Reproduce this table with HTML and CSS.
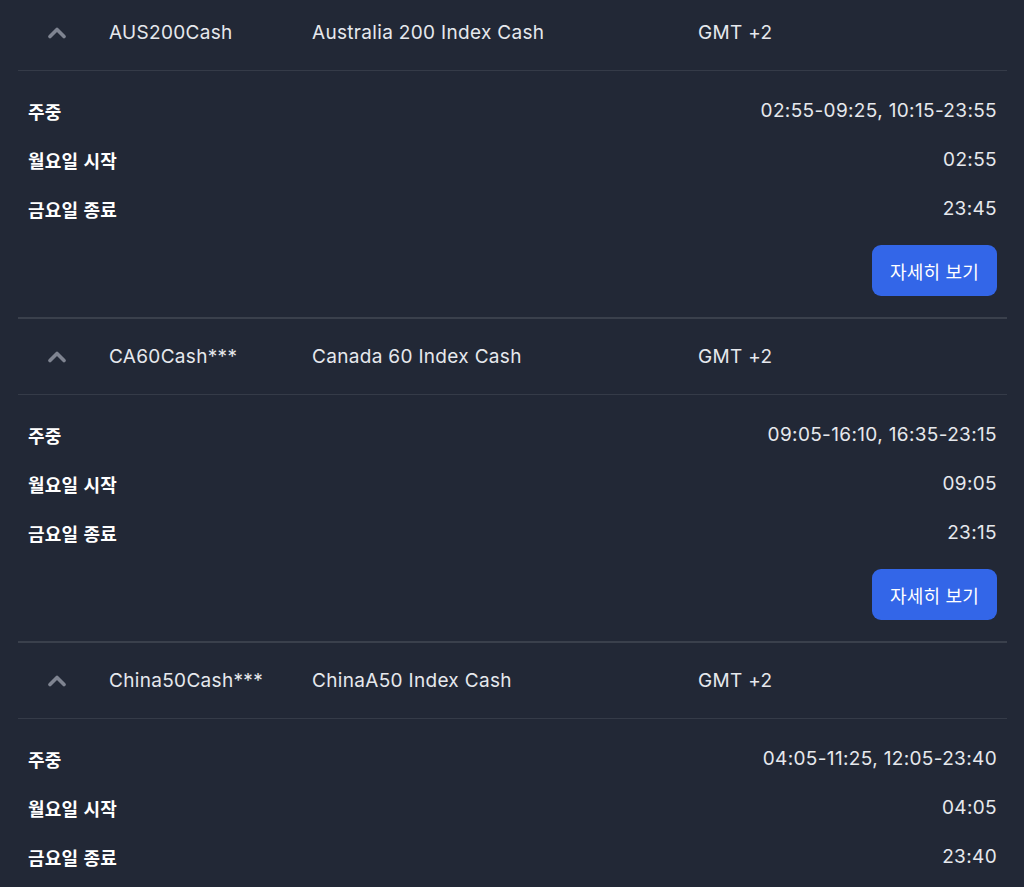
FILE: index.html
```html
<!DOCTYPE html>
<html lang="ko">
<head>
<meta charset="utf-8">
<link rel="stylesheet" href="styles.css">
</head>
<body>
<div class="list">
  <section class="item">
    <div class="head">
      <span class="chev"><svg width="20" height="13" viewBox="0 0 20 13"><path d="M3 10.5 L10 3.5 L17 10.5" fill="none" stroke="currentColor" stroke-width="3.6" stroke-linecap="round" stroke-linejoin="round"/></svg></span>
      <span>AUS200Cash</span>
      <span>Australia 200 Index Cash</span>
      <span>GMT +2</span>
    </div>
    <div class="body">
      <div class="row"><span class="lbl">주중</span><span class="val">02:55-09:25, 10:15-23:55</span></div>
      <div class="row"><span class="lbl">월요일 시작</span><span class="val">02:55</span></div>
      <div class="row"><span class="lbl">금요일 종료</span><span class="val">23:45</span></div>
      <div class="actions"><button class="btn">자세히 보기</button></div>
    </div>
  </section>
  <section class="item">
    <div class="head">
      <span class="chev"><svg width="20" height="13" viewBox="0 0 20 13"><path d="M3 10.5 L10 3.5 L17 10.5" fill="none" stroke="currentColor" stroke-width="3.6" stroke-linecap="round" stroke-linejoin="round"/></svg></span>
      <span>CA60Cash***</span>
      <span>Canada 60 Index Cash</span>
      <span>GMT +2</span>
    </div>
    <div class="body">
      <div class="row"><span class="lbl">주중</span><span class="val">09:05-16:10, 16:35-23:15</span></div>
      <div class="row"><span class="lbl">월요일 시작</span><span class="val">09:05</span></div>
      <div class="row"><span class="lbl">금요일 종료</span><span class="val">23:15</span></div>
      <div class="actions"><button class="btn">자세히 보기</button></div>
    </div>
  </section>
  <section class="item">
    <div class="head">
      <span class="chev"><svg width="20" height="13" viewBox="0 0 20 13"><path d="M3 10.5 L10 3.5 L17 10.5" fill="none" stroke="currentColor" stroke-width="3.6" stroke-linecap="round" stroke-linejoin="round"/></svg></span>
      <span>China50Cash***</span>
      <span>ChinaA50 Index Cash</span>
      <span>GMT +2</span>
    </div>
    <div class="body">
      <div class="row"><span class="lbl">주중</span><span class="val">04:05-11:25, 12:05-23:40</span></div>
      <div class="row"><span class="lbl">월요일 시작</span><span class="val">04:05</span></div>
      <div class="row"><span class="lbl">금요일 종료</span><span class="val">23:40</span></div>
    </div>
  </section>
</div>
</body>
</html>
```

FILE: styles.css
```css
html, body {
  margin: 0;
  padding: 0;
  background: #222836;
  overflow: hidden;
}
body {
  font-family: Inter, "Noto Sans CJK KR", sans-serif;
  color: #e6e8ed;
}
.list {
  margin: -5px 17px 0 18px;
}
.item {
  border-bottom: 2px solid #3a404c;
}
.head {
  display: grid;
  grid-template-columns: 91px 203px 386px 1fr;
  align-items: center;
  height: 75px;
  border-bottom: 1px solid #353b48;
  font-size: 19px;
  letter-spacing: 0.32px;
}
.chev {
  display: flex;
  padding-left: 29px;
  color: #7f8491;
}
.body {
  padding: 15px 10px 21px 10px;
}
.row {
  display: flex;
  justify-content: space-between;
  align-items: center;
  height: 49px;
}
.lbl {
  font-family: "Noto Sans CJK KR", sans-serif;
  font-weight: 700;
  font-size: 18px;
  color: #ffffff;
  letter-spacing: 0.2px;
}
.val {
  font-size: 19px;
  letter-spacing: 0.35px;
  color: #e6e8ed;
}
.actions {
  display: flex;
  justify-content: flex-end;
  margin-top: 12px;
}
.btn {
  width: 125px;
  height: 51px;
  border: none;
  border-radius: 9px;
  background: #3366e8;
  color: #ffffff;
  font-family: "Noto Sans CJK KR", sans-serif;
  font-size: 18px;
  letter-spacing: 0.2px;
  padding: 0;
}
```
